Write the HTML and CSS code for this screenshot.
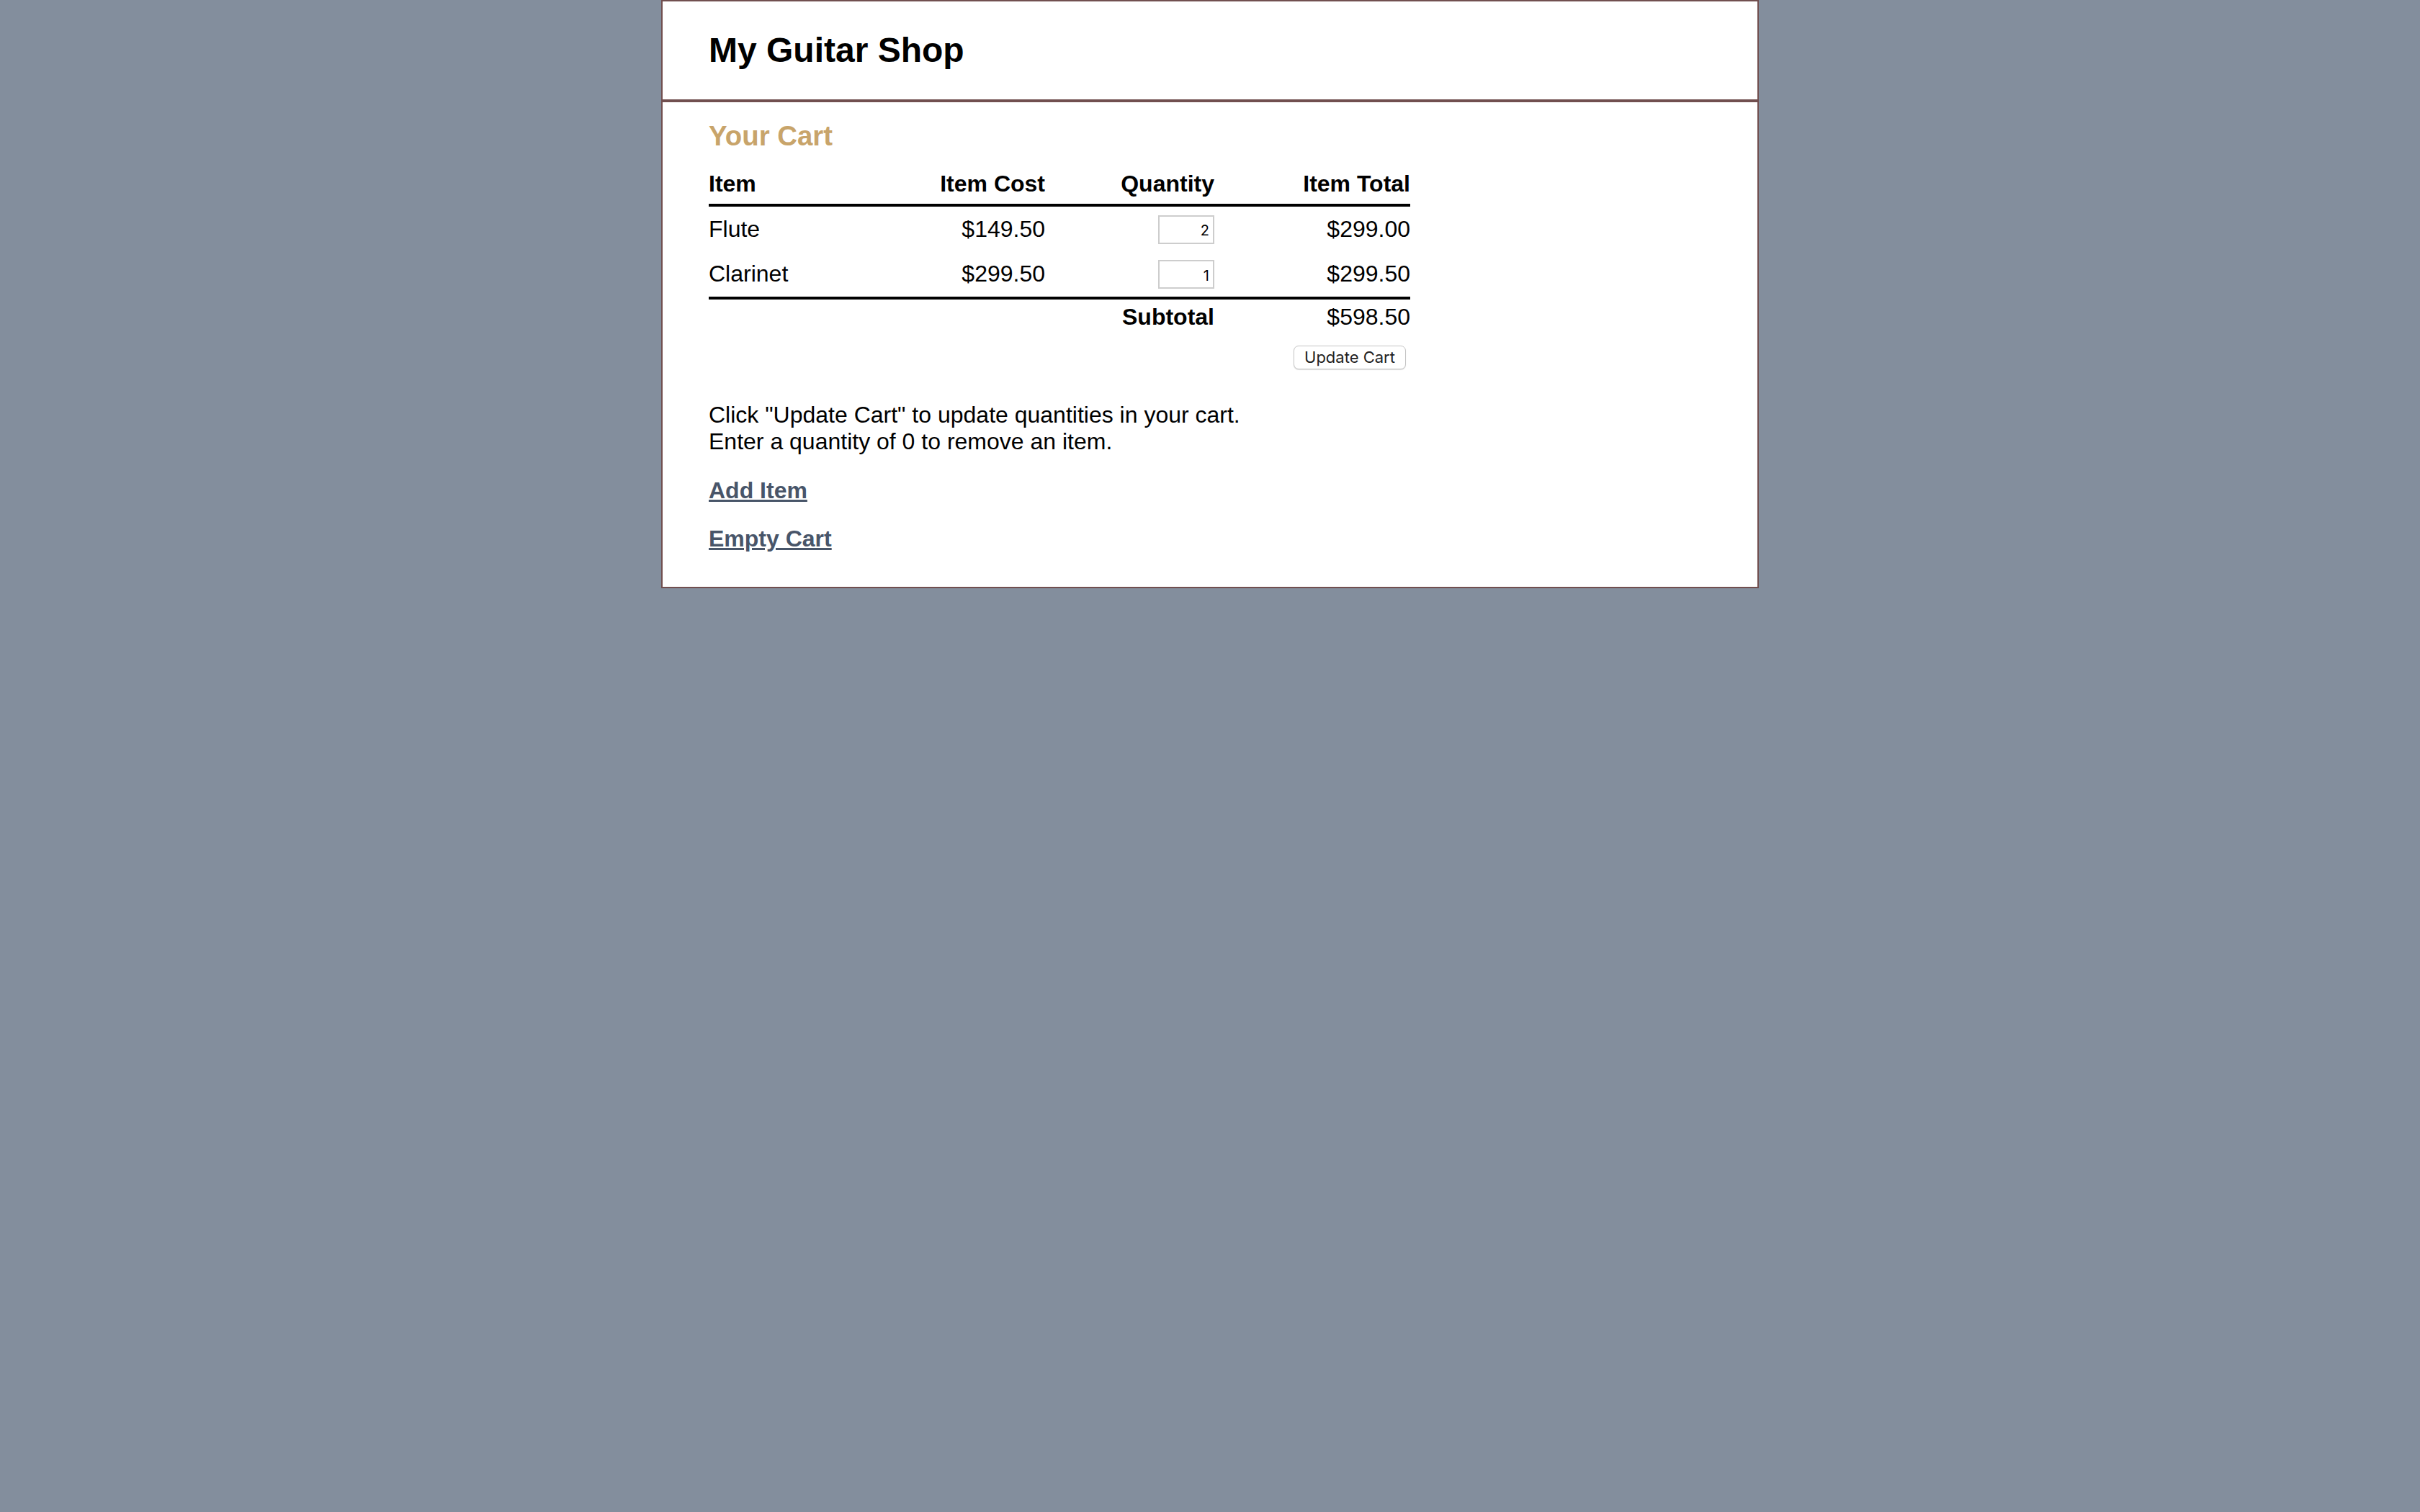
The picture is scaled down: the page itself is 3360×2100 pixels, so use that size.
FILE: index.html
```html
<!DOCTYPE html>
<html lang="en">
<head>
<meta charset="utf-8">
<title>My Guitar Shop</title>
<link rel="stylesheet" href="styles.css">
</head>
<body>
<div class="page">
  <header class="header">
    <h1 class="title">My Guitar Shop</h1>
  </header>
  <main class="main">
    <h2 class="cart-heading">Your Cart</h2>
    <form class="cart-form">
      <table class="cart">
        <colgroup>
          <col class="col-item">
          <col class="col-cost">
          <col class="col-qty">
          <col class="col-total">
        </colgroup>
        <thead>
          <tr class="cart-head">
            <th class="left">Item</th>
            <th class="right">Item Cost</th>
            <th class="right">Quantity</th>
            <th class="right">Item Total</th>
          </tr>
        </thead>
        <tbody>
          <tr class="cart-row">
            <td class="left">Flute</td>
            <td class="right">$149.50</td>
            <td class="right"><input class="qty" type="text" value="2"></td>
            <td class="right">$299.00</td>
          </tr>
          <tr class="cart-row">
            <td class="left">Clarinet</td>
            <td class="right">$299.50</td>
            <td class="right"><input class="qty" type="text" value="1"></td>
            <td class="right">$299.50</td>
          </tr>
        </tbody>
        <tfoot>
          <tr class="cart-foot">
            <td></td>
            <td></td>
            <td class="right bold">Subtotal</td>
            <td class="right">$598.50</td>
          </tr>
        </tfoot>
      </table>
      <div class="actions">
        <button class="update-btn" type="button">Update Cart</button>
      </div>
    </form>
    <p class="help">Click "Update Cart" to update quantities in your cart.<br>Enter a quantity of 0 to remove an item.</p>
    <p class="link-row"><a class="link" href="#">Add Item</a></p>
    <p class="link-row second"><a class="link" href="#">Empty Cart</a></p>
  </main>
</div>
</body>
</html>
```
FILE: styles.css
```css
html, body {
  margin: 0;
  padding: 0;
}
body {
  background-color: #838e9d;
  font-family: "Liberation Sans", Arial, Helvetica, sans-serif;
  font-size: 32px;
  color: #000;
  min-height: 2100px;
}
.page {
  width: 1520px;
  margin: 0 auto;
  background: #fff;
  border: 2px solid #714f4f;
}
.header {
  padding: 0 64px;
  border-bottom: 4px solid #714f4f;
}
.title {
  margin: 0;
  padding: 40px 0 41px;
  font-size: 48px;
  font-weight: bold;
  line-height: normal;
}
.main {
  padding: 25px 64px 48px;
}
.cart-heading {
  margin: 0;
  font-size: 38.4px;
  font-weight: bold;
  color: #c8a46a;
  line-height: normal;
}
.cart-form {
  margin: 0;
}
.cart {
  margin-top: 26px;
  width: 974px;
  table-layout: fixed;
  border-collapse: collapse;
  border-spacing: 0;
}
.col-item { width: 200px; }
.col-cost { width: 267px; }
.col-qty { width: 235px; }
.col-total { width: 272px; }
.cart th, .cart td {
  padding: 0;
  line-height: normal;
}
.cart th {
  font-weight: bold;
  padding-bottom: 9px;
  border-bottom: 4px solid #000;
}
.cart-row td {
  padding: 11px 0;
  vertical-align: middle;
}
.cart-foot td {
  border-top: 4px solid #000;
  padding-top: 6px;
}
.left { text-align: left; }
.right { text-align: right; }
.bold { font-weight: bold; }
.qty {
  box-sizing: border-box;
  width: 78px;
  height: 40px;
  margin: 0;
  padding: 3px 5px 0 2px;
  border: 2px solid #cdcdcd;
  border-radius: 0;
  font-family: Inter, "Liberation Sans", sans-serif;
  font-size: 20px;
  text-align: right;
  color: #000;
  background: #fff;
  vertical-align: middle;
}
.actions {
  width: 974px;
  margin-top: 21px;
  text-align: right;
  line-height: 0;
}
.update-btn {
  box-sizing: border-box;
  width: 156px;
  height: 33px;
  margin: 0 6px 0 0;
  padding: 0;
  border: 1px solid #c4c4c4;
  border-radius: 7px;
  background: #fff;
  box-shadow: 0 1px 1px rgba(0, 0, 0, 0.12);
  font-family: Inter, "Liberation Sans", sans-serif;
  font-size: 22px;
  color: #222;
  line-height: 31px;
}
.help {
  margin: 45px 0 0;
  line-height: normal;
}
.link-row {
  margin: 31px 0 0;
  line-height: normal;
}
.link-row.second {
  margin-top: 30px;
}
.link {
  font-weight: bold;
  color: #485569;
  text-decoration: underline;
}
```
